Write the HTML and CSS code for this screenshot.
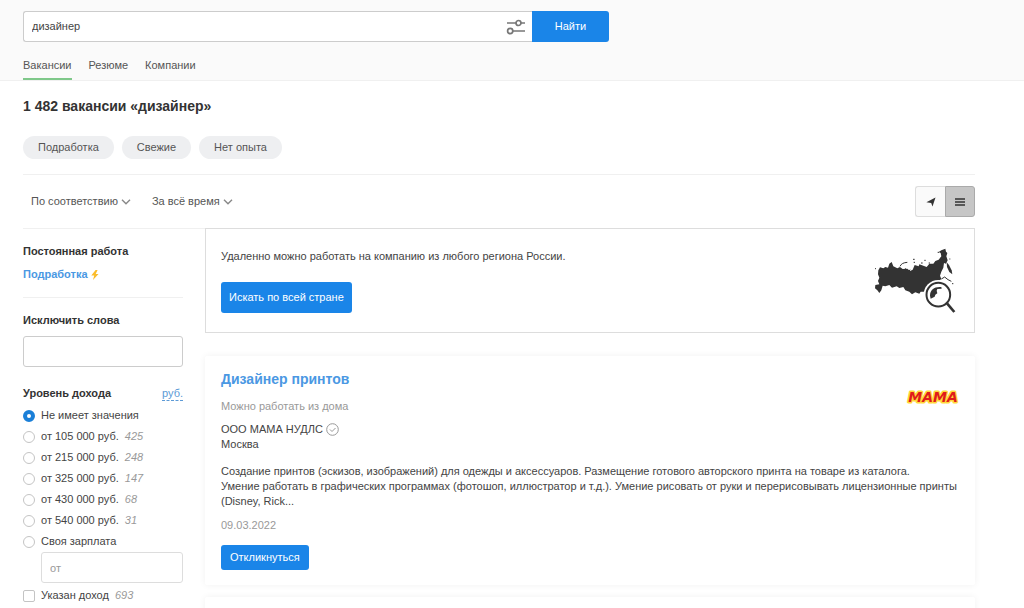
FILE: index.html
```html
<!DOCTYPE html>
<html lang="ru">
<head>
<meta charset="utf-8">
<title>Вакансии: дизайнер</title>
<meta name="viewport" content="width=device-width, initial-scale=1">
<link rel="stylesheet" href="styles.css">
</head>
<body>
<header class="header">
  <form class="search" onsubmit="return false">
    <div class="search-box">
      <input class="search-input" type="text" value="дизайнер" aria-label="Поиск">
      <button class="filters" type="button" aria-label="Фильтры">
        <svg width="20" height="16" viewBox="0 0 20 16" fill="none" stroke="#777" stroke-width="1.7"><path d="M1 4h9M15 4h4M1 12h1M7 12h12"/><circle cx="12.5" cy="4" r="2.5"/><circle cx="4.2" cy="12" r="2.6"/></svg>
      </button>
    </div>
    <button class="btn search-btn" type="submit">Найти</button>
  </form>
  <nav class="tabs">
    <a class="tab tab-active" href="#">Вакансии</a>
    <a class="tab" href="#">Резюме</a>
    <a class="tab" href="#">Компании</a>
  </nav>
</header>
<div class="page">
  <h1 class="title">1 482 вакансии «дизайнер»</h1>
  <div class="chips">
    <button class="chip" type="button">Подработка</button>
    <button class="chip" type="button">Свежие</button>
    <button class="chip" type="button">Нет опыта</button>
  </div>
  <div class="toolbar">
    <button class="sort" type="button">По соответствию <svg width="10" height="6" viewBox="0 0 10 6" fill="none" stroke="#888" stroke-width="1.4"><path d="M1 .8l4 4 4-4"/></svg></button>
    <button class="sort" type="button">За всё время <svg width="10" height="6" viewBox="0 0 10 6" fill="none" stroke="#888" stroke-width="1.4"><path d="M1 .8l4 4 4-4"/></svg></button>
    <div class="views">
      <button class="view" type="button" aria-label="На карте"><svg width="10" height="10" viewBox="0 0 10 10" fill="#333"><path d="M9.500.5L6.500 9.500 5.200 6 .4 5.200z"/></svg></button>
      <button class="view view-active" type="button" aria-label="Списком"><svg width="10" height="8" viewBox="0 0 10 8" stroke="#333" stroke-width="1.6"><path d="M0 1h10M0 4h10M0 7h10"/></svg></button>
    </div>
  </div>
  <div class="columns">
    <aside class="sidebar">
      <div class="kind">
        <strong class="kind-current">Постоянная работа</strong>
        <a class="kind-link" href="#">Подработка <svg width="8" height="10" viewBox="0 0 8 10" fill="#fbbc2a"><path d="M4.6 0L.3 5.5h2.9L2 10l5.5-6H4.7L6.6 0z"/></svg></a>
      </div>
      <div class="exclude">
        <label class="label" for="exclude">Исключить слова</label>
        <input class="field" id="exclude" type="text">
      </div>
      <div class="income">
        <div class="income-head"><span class="label">Уровень дохода</span><a class="currency" href="#">руб.</a></div>
        <label class="option"><input class="radio" type="radio" name="income" checked>Не имеет значения</label>
        <label class="option"><input class="radio" type="radio" name="income">от 105 000 руб.<i class="count">425</i></label>
        <label class="option"><input class="radio" type="radio" name="income">от 215 000 руб.<i class="count">248</i></label>
        <label class="option"><input class="radio" type="radio" name="income">от 325 000 руб.<i class="count">147</i></label>
        <label class="option"><input class="radio" type="radio" name="income">от 430 000 руб.<i class="count">68</i></label>
        <label class="option"><input class="radio" type="radio" name="income">от 540 000 руб.<i class="count">31</i></label>
        <label class="option"><input class="radio" type="radio" name="income">Своя зарплата</label>
        <div class="own"><input class="field field-own" type="text" placeholder="от" aria-label="Зарплата от"></div>
        <label class="option"><input class="check" type="checkbox">Указан доход<i class="count">693</i></label>
      </div>
    </aside>
    <main class="results">
      <section class="promo">
        <div class="promo-body">
          <p class="promo-text">Удаленно можно работать на компанию из любого региона России.</p>
          <button class="btn promo-btn" type="button">Искать по всей стране</button>
        </div>
        <svg class="map" width="82" height="68" viewBox="12 12 246 204">
          <path fill="#333" d="M25 82L30 73 40 76 46 72 54 74 58 62 65 57 70 70 82 76 90 72 98 78 112 77 120 84 128 80 134 66 146 70 148 64 160 68 170 72 178 62 190 62 196 54 206 50 214 40 212 30 206 27 214 22 226 17 228 26 232 30 229 40 233 52 228 62 222 60 220 74 214 86 210 98 214 108 206 114 186 118 172 128 168 146 152 146 148 152 136 148 126 154 118 146 106 142 100 132 88 135 80 130 66 134 58 126 46 130 38 128 34 142 28 150 22 142 15 136 16 126 28 124 24 114 28 104 24 94z"/>
          <path fill="#333" d="M230 58l7 8 8 16 2 12-9-7-7-15z"/>
          <path fill="none" stroke="#333" stroke-width="3" d="M90 70c4-8 10-11 22-12M106 76l8 14 6-10M214 108l10-6 10 8 10 5M15 77h3M129 49h5M131 58h4M163 52h4M176 60h4M203 28h4M246 122h4M153 60h5M238 48h3"/>
          <circle cx="205" cy="155" r="44" fill="#fff"/>
          <circle cx="205" cy="155" r="35.500" fill="none" stroke="#333" stroke-width="6"/>
          <path fill="#333" d="M180 158c0-18 14-28 34-26l1 5-13 1-2 5 2 8-6 4-2 6-12 6z"/>
          <path stroke="#333" stroke-width="8" d="M231 181l22 26"/>
        </svg>
      </section>
      <article class="card">
        <div class="card-head">
          <div>
            <h2 class="card-title"><a class="card-link" href="#">Дизайнер принтов</a></h2>
            <p class="remote">Можно работать из дома</p>
            <p class="company">ООО МАМА НУДЛС <svg width="13" height="13" viewBox="0 0 13 13" fill="none" stroke="#999"><circle cx="6.500" cy="6.500" r="5.800"/><path d="M4 6.500l2 2 3.500-3.500"/></svg></p>
            <p class="city">Москва</p>
          </div>
          <svg class="brand" width="52" height="18" viewBox="0 0 52 18"><text class="brand-text" x="26" y="14" text-anchor="middle">MAMA</text></svg>
        </div>
        <p class="description">Создание принтов (эскизов, изображений) для одежды и аксессуаров. Размещение готового авторского принта на товаре из каталога.<br>Умение работать в графических программах (фотошоп, иллюстратор и т.д.). Умение рисовать от руки и перерисовывать лицензионные принты (Disney, Rick...</p>
        <p class="date">09.03.2022</p>
        <button class="btn apply" type="button">Откликнуться</button>
      </article>
      <article class="card"></article>
    </main>
  </div>
</div>
</body>
</html>
```
FILE: styles.css
```css
* { box-sizing: border-box; }
html { overflow: hidden; }
body {
  margin: 0;
  height: 100vh;
  overflow: hidden;
  background: #fff;
  color: #444;
  font: 11px/15px "Liberation Sans", Arial, sans-serif;
}
button, input { font: inherit; color: inherit; }
button { padding: 0; border: 0; background: none; }
a { text-decoration: none; }
h1, h2, p { margin: 0; }
svg { flex: none; }

.header { padding: 11px 49px 0 23px; background: #fafafa; border-bottom: 1px solid #f0f0f0; }
.search { display: flex; max-width: 586px; height: 31px; }
.search-box { display: flex; flex: 1; align-items: center; background: #fff; border: 1px solid #ccc; border-right: 0; border-radius: 3px 0 0 3px; }
.search-input { flex: 1; min-width: 0; padding: 0 8px; border: 0; background: none; outline: 0; }
.filters { display: flex; margin-right: 6px; }
.btn { background: #1a85e8; color: #fff; border-radius: 3px; }
.search-btn { width: 77px; border-radius: 0 3px 3px 0; }
.tabs { display: flex; gap: 17px; padding-top: 16px; }
.tab { color: #555; height: 22px; border-bottom: 2px solid transparent; }
.tab-active { border-color: #7fc88a; }

.page { padding: 17px 49px 0 23px; }
.title { font-size: 14px; line-height: 16px; color: #333; }
.chips { display: flex; gap: 8px; padding: 22px 0 15px; }
.chip { height: 23px; padding: 0 15px; border-radius: 12px; background: #eeeff1; color: #555; }
.toolbar { display: flex; align-items: center; gap: 21px; padding: 11px 0 11px 8px; border-top: 1px solid #f0f0f0; border-bottom: 1px solid #f0f0f0; }
.sort { display: flex; align-items: center; gap: 3px; color: #555; }
.views { display: flex; margin-left: auto; }
.view { display: grid; place-items: center; width: 30px; height: 31px; border: 1px solid #ddd; border-right: 0; border-radius: 3px 0 0 3px; background: #fafafa; }
.view-active { border: 1px solid #aaa; border-radius: 0 3px 3px 0; background: #c6c6c6; }

.columns { display: grid; grid-template-columns: 160px minmax(0, 1fr); gap: 22px; }
.kind { display: grid; gap: 8px; padding: 15px 0; border-bottom: 1px solid #f0f0f0; }
.kind-current, .label { color: #333; font-weight: bold; }
.kind-link { display: flex; align-items: center; gap: 3px; color: #4a98e3; font-weight: bold; }
.exclude { display: grid; gap: 8px; padding: 15px 0 19px; }
.field { width: 100%; height: 31px; padding: 0 8px; border: 1px solid #ccc; border-radius: 3px; background: #fff; }
.field::placeholder { color: #999; }
.income { display: grid; gap: 6px; }
.income-head { display: flex; justify-content: space-between; margin-bottom: 1px; }
.currency { color: #5c9ad6; line-height: 14px; border-bottom: 1px dashed #5c9ad6; }
.option { display: flex; align-items: center; height: 15px; }
.radio, .check { appearance: none; width: 12px; height: 12px; margin: 0 6px 0 0; border: 1px solid #c4c4c4; background: #fff; }
.radio { border-radius: 50%; }
.radio:checked { border: 4px solid #1a7fd8; }
.check { border-radius: 2px; }
.count { margin-left: 6px; color: #999; }
.own { display: flex; padding-left: 18px; margin: -3px 0 -1px; }
.field-own { border-color: #ddd; }

.results { display: flex; flex-direction: column; }
.promo { display: flex; justify-content: space-between; margin: -1px 0 23px; padding: 20px 18px 19px 15px; border: 1px solid #ddd; }
.promo-btn { height: 31px; margin-top: 18px; padding: 0 8px; }
.map { margin: -2px 0; }
.card { min-height: 80px; margin-bottom: 12px; padding: 15px 16px; background: #fff; border-radius: 2px; box-shadow: 0 0 7px rgba(0, 0, 0, 0.06); }
.card-head { display: flex; justify-content: space-between; }
.card-title { font-size: 14px; line-height: 16px; }
.card-link { color: #4a98e3; }
.remote { margin-top: 12px; color: #999; }
.company { display: flex; align-items: center; gap: 3px; margin-top: 8px; }
.description { margin-top: 12px; }
.date { margin-top: 9px; color: #999; }
.apply { height: 25px; margin-top: 12px; padding: 0 9px; }
.brand { margin-top: 17px; overflow: visible; }
.brand-text { font: italic bold 14px "DejaVu Sans", sans-serif; fill: #e01b1b; stroke: #ffd83a; stroke-width: 3px; stroke-linejoin: round; paint-order: stroke; }
```
